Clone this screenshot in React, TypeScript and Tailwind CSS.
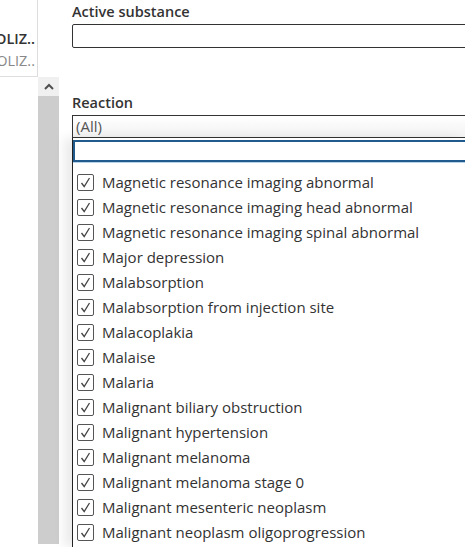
import React from 'react';

const reactions = [
  'Magnetic resonance imaging abnormal',
  'Magnetic resonance imaging head abnormal',
  'Magnetic resonance imaging spinal abnormal',
  'Major depression',
  'Malabsorption',
  'Malabsorption from injection site',
  'Malacoplakia',
  'Malaise',
  'Malaria',
  'Malignant biliary obstruction',
  'Malignant hypertension',
  'Malignant melanoma',
  'Malignant melanoma stage 0',
  'Malignant mesenteric neoplasm',
  'Malignant neoplasm oligoprogression',
];

function CheckBox() {
  return (
    <span className="flex h-[17px] w-[17px] shrink-0 items-center justify-center rounded-[2px] border border-[#555] bg-white">
      <svg width="13" height="13" viewBox="0 0 13 13" fill="none">
        <path d="M2.5 7 L5.2 10.5 L10.5 2" stroke="#444" strokeWidth="1.3" />
      </svg>
    </span>
  );
}

export default function App() {
  return (
    <div
      className="flex h-[547px] w-[465px] overflow-hidden bg-white text-[#333]"
      style={{ fontFamily: '"Open Sans", "Noto Sans", sans-serif' }}
    >
      {/* Left side: truncated column and scrollbar */}
      <div className="flex w-[60px] shrink-0 flex-col">
        <div className="flex h-[77px] w-[38px] flex-col items-end overflow-hidden border-r border-b border-[#ddd] pt-[28px] pr-[2px]">
          <span className="text-[14.5px] leading-[22px] font-semibold whitespace-nowrap">OLIZ..</span>
          <span className="text-[14.5px] leading-[22px] whitespace-nowrap text-[#888]">OLIZ..</span>
        </div>
        <div className="ml-[38px] flex w-[21px] flex-col">
          <div className="flex h-[19px] items-center justify-center bg-[#f0f0f0]">
            <svg width="10" height="7" viewBox="0 0 10 7" fill="none">
              <path d="M1 6 L5 2 L9 6" stroke="#505050" strokeWidth="2" />
            </svg>
          </div>
          <div className="h-[448px] bg-[#cdcdcd]" />
        </div>
      </div>

      {/* Filters */}
      <div className="flex min-w-0 flex-1 flex-col pl-[12px]">
        <div className="text-[14.5px] leading-[24px] font-semibold whitespace-nowrap">Active substance</div>
        <div className="h-[24px] w-[420px] rounded-[2px] border border-[#333]" />

        <div className="mt-[43px] text-[14.5px] leading-[24px] font-semibold whitespace-nowrap">Reaction</div>
        <div className="flex h-[23px] w-[420px] items-center border border-[#333] bg-gradient-to-b from-white to-[#f2f2f2] pl-[3px] text-[15px] text-[#555]">
          (All)
        </div>

        <div className="flex flex-1 flex-col border-l border-[#222] bg-white shadow-[-8px_0_10px_rgba(0,0,0,0.08)]">
          <div className="mt-[2px] h-[22px] w-[420px] border-2 border-[#215a8c] bg-white shadow-[0_1px_0_#b7d3ea]" />
          <ul className="mt-[8px] flex flex-col pl-[4px]">
            {reactions.map(r => (
              <li key={r} className="flex h-[25px] items-center gap-[8px]">
                <CheckBox />
                <span className="text-[15px] whitespace-nowrap">{r}</span>
              </li>
            ))}
          </ul>
        </div>
      </div>
    </div>
  );
}
